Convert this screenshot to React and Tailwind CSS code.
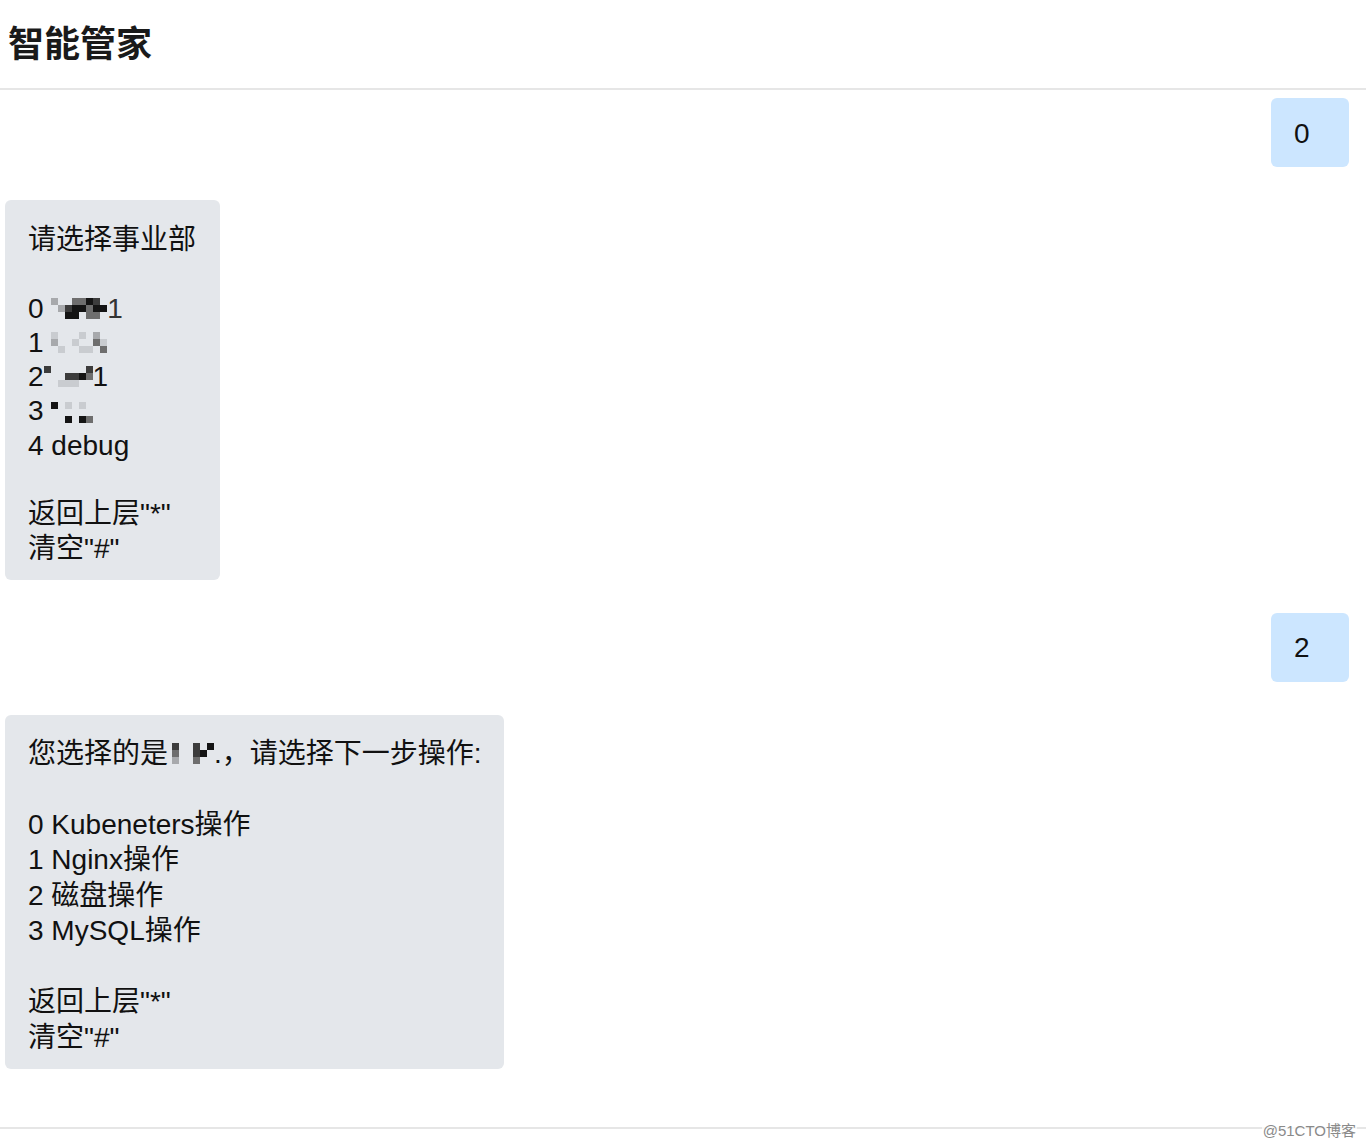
import React from "react";

const SHADES = {
  "1": "#141414",
  "2": "#3c3c3c",
  "3": "#6e6e6e",
  "4": "#a7a9ac",
  "5": "#c9ccd0",
};

function Mosaic({ rows, className = "" }) {
  return (
    <span className={"inline-flex flex-col align-middle " + className}>
      {rows.map((r, i) => (
        <span key={i} className="flex">
          {r.split("").map((c, j) => (
            <span
              key={j}
              className="block w-[7px] h-[7px]"
              style={{ backgroundColor: SHADES[c] || "transparent" }}
            />
          ))}
        </span>
      ))}
    </span>
  );
}

function Line({ children, big }) {
  return (
    <div className={big ? "h-[35.5px] leading-[35.5px] whitespace-nowrap" : "h-[34.3px] leading-[34.3px] whitespace-nowrap"}>
      {children}
    </div>
  );
}

function UserBubble({ text }) {
  return (
    <div className="flex justify-end">
      <div className="w-[78px] h-[69px] rounded-[6px] bg-[#cce6ff] flex items-center pl-[23px] pt-[2px] text-[28px] text-[#111]">
        {text}
      </div>
    </div>
  );
}

export default function App() {
  const font = "font-['Liberation_Sans','Noto_Sans_CJK_SC',sans-serif]";
  return (
    <div className={"h-[1146px] flex flex-col bg-white text-[#111] relative overflow-hidden " + font}>
      <div className="h-[90px] flex items-center pl-[8px] pb-[6px] border-b-2 border-[#e6e6e6] shrink-0">
        <h1 className="text-[36px] font-bold text-[#1a1a1a] font-['Noto_Sans_CJK_SC',sans-serif] leading-none">
          智能管家
        </h1>
      </div>

      <div className="flex-1 pl-[5px] pr-[17px] pt-[8px] flex flex-col gap-[33px]">
        <UserBubble text="0" />

        <div className="flex">
          <div className="w-[215px] rounded-[6px] bg-[#e4e7eb] pl-[23px] pt-[23px] pb-[14px] text-[28px]">
            <Line>请选择事业部</Line>
            <Line />
            <Line>
              0{" "}
              <Mosaic rows={["4..3312.", ".4211311", "..11.33."]} className="-mt-[4px]" />
              <span className="text-[#333]">1</span>
            </Line>
            <Line>
              1{" "}
              <Mosaic rows={["5...5.4.", "4..5..35", ".5..55.3"]} className="-mt-[4px]" />
            </Line>
            <Line>
              2
              <Mosaic rows={["2.....2", "...2213", "..555.."]} className="-mt-[4px]" />
              <span>1</span>
            </Line>
            <Line>
              3{" "}
              <Mosaic rows={["1.5.5.", "......", "..1.13"]} className="-mt-[2px]" />
            </Line>
            <Line>4 debug</Line>
            <Line />
            <Line>返回上层"*"</Line>
            <Line>清空"#"</Line>
          </div>
        </div>

        <UserBubble text="2" />

        <div className="flex">
          <div className="w-[499px] rounded-[6px] bg-[#e4e7eb] pl-[23px] pt-[21px] pb-[14px] text-[28px]">
            <Line big>
              您选择的是
              <Mosaic rows={["2..2.1", "3..21.", "4..3.."]} className="ml-[4px] -mt-[4px]" />
              .，请选择下一步操作:
            </Line>
            <Line big />
            <Line big>0 Kubeneters操作</Line>
            <Line big>1 Nginx操作</Line>
            <Line big>2 磁盘操作</Line>
            <Line big>3 MySQL操作</Line>
            <Line big />
            <Line big>返回上层"*"</Line>
            <Line big>清空"#"</Line>
          </div>
        </div>
      </div>

      <div className="h-[19px] border-t-2 border-[#e6e6e6] shrink-0" />

      <div className="absolute right-[9px] bottom-[8px] text-[15px] leading-none text-[#8a8a8a] bg-white/70 px-[1px] font-['Liberation_Sans','Noto_Sans_CJK_SC',sans-serif]">
        @51CTO博客
      </div>
    </div>
  );
}
